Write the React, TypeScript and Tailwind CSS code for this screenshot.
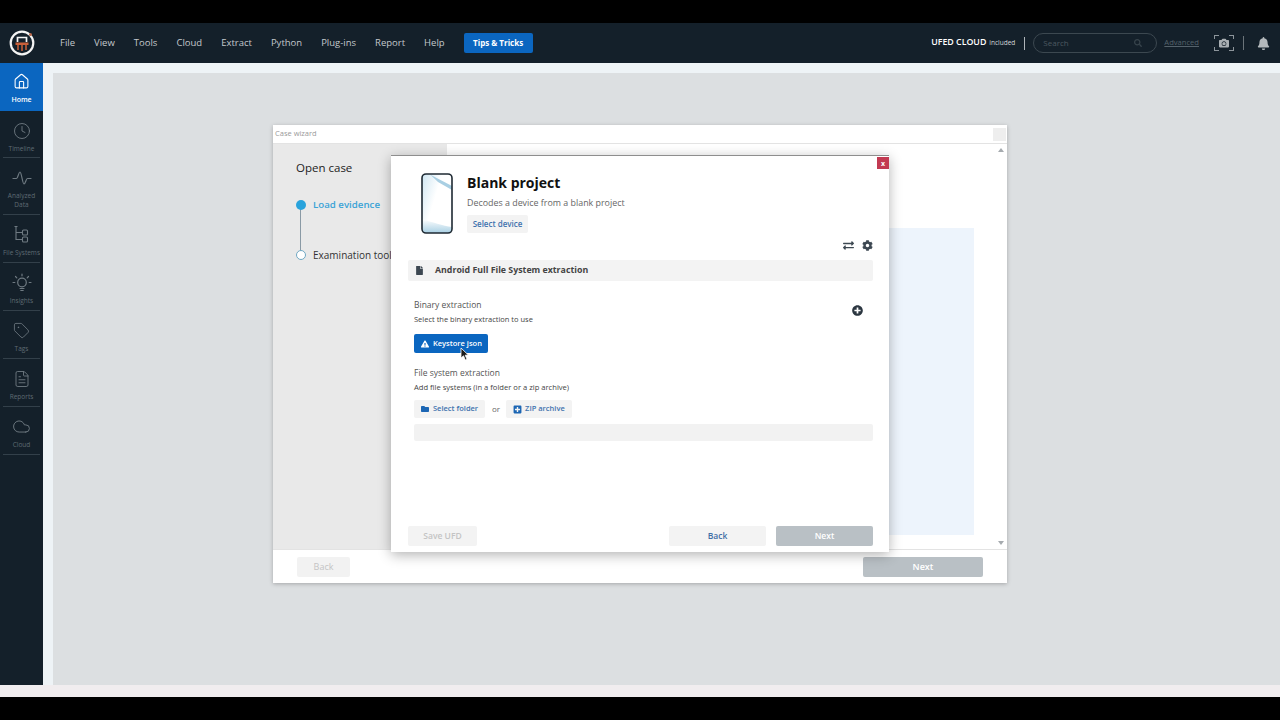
import { Home, Clock, Tag, FileText, Cloud } from 'lucide-react';
import { FaFile, FaExchangeAlt, FaCog, FaPlusCircle, FaExclamationTriangle, FaFolder, FaPlusSquare, FaBell, FaCamera, FaSearch } from 'react-icons/fa';

const menus = ['File', 'View', 'Tools', 'Cloud', 'Extract', 'Python', 'Plug-ins', 'Report', 'Help'];

function FileSystemsIcon() {
  return (
    <svg width="15" height="17" viewBox="0 0 15 17" fill="none" stroke="currentColor" strokeWidth="1.1">
      <path d="M2 0.500V13.500H8M2 6.500H8" />
      <path d="M0.500 0.500H3.500" />
      <rect x="8.500" y="4" width="5" height="5" rx="1" />
      <rect x="8.500" y="11" width="5" height="5" rx="1" />
    </svg>
  );
}

function PulseIcon() {
  return (
    <svg width="20" height="16" viewBox="0 0 20 16" fill="none" stroke="currentColor" strokeWidth="1.2" strokeLinecap="round" strokeLinejoin="round">
      <path d="M1 8.500H4.500C6 8.500 6.500 2 8 2C9.500 2 10.500 14 12 14C13.500 14 14 8.500 15.500 8.500H19" />
    </svg>
  );
}

function BulbIcon() {
  return (
    <svg width="20" height="20" viewBox="0 0 20 20" fill="none" stroke="currentColor" strokeWidth="1.2" strokeLinecap="round">
      <circle cx="10" cy="9.500" r="4.300" />
      <path d="M8 15.500H12M8.800 17.500H11.200" />
      <path d="M10 1V2.800M3.500 3.500L4.800 4.800M16.500 3.500L15.200 4.800M1 9.500H2.800M17.200 9.500H19" />
    </svg>
  );
}

const navItems = [
  { label: ['Timeline'], icon: <Clock size={18} strokeWidth={1.2} />, h: 'h-[47px]' },
  { label: ['Analyzed', 'Data'], icon: <PulseIcon />, h: 'h-[57px]' },
  { label: ['File Systems'], icon: <FileSystemsIcon />, h: 'h-[48px]' },
  { label: ['Insights'], icon: <BulbIcon />, h: 'h-[48px]' },
  { label: ['Tags'], icon: <Tag size={17} strokeWidth={1.2} />, h: 'h-[48px]' },
  { label: ['Reports'], icon: <FileText size={18} strokeWidth={1.2} />, h: 'h-[48px]' },
  { label: ['Cloud'], icon: <Cloud size={19} strokeWidth={1.2} />, h: 'h-[48px]' },
];

function Logo() {
  return (
    <svg width="26" height="26" viewBox="0 0 26 26" fill="none">
      <circle cx="13" cy="13" r="11.300" stroke="#f4f4f4" strokeWidth="2.200" />
      <circle cx="21.500" cy="4.500" r="1.500" fill="#b9694a" />
      <path d="M8.500 12V7.500H17.500V12" stroke="#f4f4f4" strokeWidth="1.700" />
      <path d="M6.500 12.500H19.500V15H6.500Z" fill="#c9603a" />
      <path d="M9 15V20M13 15V21M17 15V20" stroke="#c9603a" strokeWidth="1.500" />
    </svg>
  );
}

function PhoneIcon() {
  return (
    <svg width="32" height="61" viewBox="0 0 32 61" fill="none">
      <defs>
        <linearGradient id="phoneTop" x1="0" y1="0" x2="1" y2="0.6">
          <stop offset="0" stopColor="#cfe6f2" />
          <stop offset="0.5" stopColor="#ffffff" />
          <stop offset="1" stopColor="#ffffff" />
        </linearGradient>
        <linearGradient id="phoneBottom" x1="0" y1="0" x2="0" y2="1">
          <stop offset="0" stopColor="#ffffff" />
          <stop offset="1" stopColor="#a9d0e4" />
        </linearGradient>
      </defs>
      <rect x="1" y="1" width="30" height="59" rx="4" fill="url(#phoneTop)" />
      <path d="M9 1.500L31 13V17L17 9Z" fill="#a9cfe3" />
      <path d="M1 46C11 49 22 53 31 54V56C31 58.500 29.500 60 27 60H5C2.500 60 1 58.500 1 56Z" fill="url(#phoneBottom)" />
      <rect x="1" y="1" width="30" height="59" rx="4" stroke="#1f2a33" strokeWidth="1.600" />
    </svg>
  );
}

function Cursor() {
  return (
    <svg className="absolute left-[46px] top-[13px]" width="9" height="14" viewBox="0 0 9 14">
      <path d="M1 1V11L3.500 8.800L5.300 13L7 12.200L5.200 8.200L8.300 8Z" fill="#1b1b1b" stroke="#ffffff" strokeWidth="0.800" />
    </svg>
  );
}

export default function App() {
  return (
    <div className="h-[720px] w-[1280px] overflow-hidden bg-black flex flex-col pt-[23px] pb-[23px] font-['Open_Sans',sans-serif]">
      {/* Top bar */}
      <header className="h-[40px] shrink-0 bg-[#14202a] flex items-center">
        <div className="w-[44px] flex justify-center">
          <Logo />
        </div>
        <nav className="flex items-center gap-[19px] ml-[16px] text-[9.500px] text-[#c3c8cc]">
          {menus.map((m) => (
            <span key={m}>{m}</span>
          ))}
        </nav>
        <div className="ml-[19px] h-[20px] w-[69px] rounded-[2px] bg-[#0b66c0] text-white text-[8px] font-bold flex items-center justify-center">
          Tips &amp; Tricks
        </div>
        <div className="ml-auto flex items-center pr-[10px]">
          <span className="text-white text-[8.800px] font-semibold">UFED CLOUD</span>
          <span className="text-[#d5d8da] text-[6.500px] ml-[3px]">included</span>
          <span className="w-px h-[13px] bg-[#aeb4b9] ml-[9px]" />
          <div className="ml-[8px] w-[124px] h-[20px] rounded-full border border-[#3c4850] flex items-center justify-between pl-[9px] pr-[14px] text-[8px] text-[#4c5860]">
            <span>Search</span>
            <FaSearch size={8} className="text-[#37434b]" />
          </div>
          <span className="ml-[7px] text-[7.600px] text-[#55626b] underline">Advanced</span>
          <div className="ml-[15px] w-[20px] h-[16px] relative flex items-center justify-center text-[#a9afb3]">
            <FaCamera size={10} />
            <span className="absolute left-0 top-0 w-[5px] h-[4px] border-l border-t border-[#8d959b]" />
            <span className="absolute right-0 top-0 w-[5px] h-[4px] border-r border-t border-[#8d959b]" />
            <span className="absolute left-0 bottom-0 w-[5px] h-[4px] border-l border-b border-[#8d959b]" />
            <span className="absolute right-0 bottom-0 w-[5px] h-[4px] border-r border-b border-[#8d959b]" />
          </div>
          <span className="ml-[9px] w-px h-[14px] bg-[#6b747a]" />
          <FaBell size={13} className="ml-[13px] text-[#b4b9bc]" />
        </div>
      </header>

      <div className="h-[622px] shrink-0 flex">
        {/* Sidebar */}
        <aside className="w-[43px] shrink-0 bg-[#14202a] flex flex-col">
          <div className="h-[48px] bg-[#0b66c0] text-white flex flex-col items-center pt-[10px]">
            <Home size={17} strokeWidth={1.5} />
            <span className="text-[7px] font-semibold mt-[5px]">Home</span>
          </div>
          {navItems.map((item) => (
            <div key={item.label[0]} className={`${item.h} mx-[3px] border-b border-[#33404a] flex flex-col items-center pt-[10px] text-[#6f7a82]`}>
              <div className="h-[19px] flex items-center justify-center">{item.icon}</div>
              <div className="mt-[4px] text-[6.500px] leading-[9px] text-center whitespace-nowrap text-[#5f6b73]">
                {item.label.map((l) => (
                  <div key={l}>{l}</div>
                ))}
              </div>
            </div>
          ))}
        </aside>

        {/* Content area */}
        <main className="flex-1 bg-[#eef3f6] pl-[10px] pt-[10px]">
          <div className="h-full bg-[#dcdfe1] pl-[220px] pt-[52px]">
            {/* Case wizard */}
            <div className="relative w-[734px] h-[458px] bg-white shadow-[0_1px_4px_rgba(0,0,0,0.25)] flex flex-col">
              <div className="h-[19px] shrink-0 border-b border-[#e3e3e3] flex items-center justify-between pl-[2px] pr-[1px]">
                <span className="text-[7.500px] text-[#9a9a9a]">Case wizard</span>
                <span className="w-[13px] h-[13px] bg-[#eeeeee]" />
              </div>
              <div className="flex-1 flex min-h-0">
                <div className="w-[174px] shrink-0 bg-[#e9e9e9] pl-[23px] pt-[15px]">
                  <div className="text-[11.500px] text-[#222222] leading-[18px]">Open case</div>
                  <div className="relative mt-[21px]">
                    <div className="absolute left-[4px] top-[8px] w-px h-[50px] bg-[#8a9aa5]" />
                    <div className="flex items-center h-[14px]">
                      <span className="relative w-[10px] h-[10px] rounded-full bg-[#29a3dc]" />
                      <span className="ml-[7px] mt-[1px] text-[9.700px] font-semibold text-[#3aa3d6]">Load evidence</span>
                    </div>
                    <div className="flex items-center h-[14px] mt-[36px]">
                      <span className="relative w-[10px] h-[10px] rounded-full bg-white border border-[#6fa8c4]" />
                      <span className="ml-[7px] text-[10px] text-[#333333] whitespace-nowrap">Examination tools</span>
                    </div>
                  </div>
                </div>
                <div className="flex-1 flex">
                  <div className="flex-1 pt-[84px] pl-[442px] pb-[14px]">
                    <div className="w-[85px] h-full bg-[#edf4fc]" />
                  </div>
                  <div className="w-[13px] flex flex-col justify-between items-center py-[4px] text-[#9aa0a4]">
                    <span className="w-0 h-0 border-x-[3px] border-x-transparent border-b-[4px] border-b-[#a6abaf]" />
                    <span className="w-0 h-0 border-x-[3px] border-x-transparent border-t-[4px] border-t-[#a6abaf]" />
                  </div>
                </div>
              </div>
              <div className="h-[34px] shrink-0 border-t border-[#e3e3e3] flex items-center justify-between pl-[24px] pr-[24px]">
                <div className="w-[53px] h-[20px] bg-[#f2f2f2] rounded-[2px] flex items-center justify-center text-[9px] text-[#c4c4c4]">Back</div>
                <div className="w-[120px] h-[20px] bg-[#b9c0c5] rounded-[2px] flex items-center justify-center text-[9px] font-semibold text-white">Next</div>
              </div>

              {/* Blank project dialog */}
              <div className="absolute left-[118px] top-[30px] w-[498px] h-[397px] bg-white border-t border-[#8e8e8e] shadow-[0_3px_12px_rgba(0,0,0,0.3)] flex flex-col pl-[17px] pr-[16px]">
                <div className="absolute right-0 top-[1px] w-[12px] h-[12px] bg-[#c23a52] text-white text-[7px] font-bold flex items-center justify-center leading-none">x</div>
                <div className="flex pl-[13px] pt-[17px]">
                  <PhoneIcon />
                  <div className="ml-[14px]">
                    <div className="text-[14px] font-bold text-[#111111] leading-[20px]">Blank project</div>
                    <div className="text-[8.900px] text-[#666666] leading-[13px] mt-[3px]">Decodes a device from a blank project</div>
                    <div className="mt-[6px] w-[61px] h-[18px] bg-[#f3f3f3] rounded-[2px] flex items-center justify-center text-[8px] font-semibold text-[#3f72ae]">Select device</div>
                  </div>
                </div>
                <div className="flex justify-end items-center gap-[8px] h-[12px] mt-[5px] text-[#3d4852]">
                  <FaExchangeAlt size={11} />
                  <FaCog size={11} />
                </div>
                <div className="h-[21px] mt-[9px] bg-[#f3f3f3] rounded-[2px] flex items-center pl-[7px] text-[#3d4852]">
                  <FaFile size={9} />
                  <span className="ml-[11px] text-[8.800px] font-bold text-[#444444]">Android Full File System extraction</span>
                </div>
                <div className="flex justify-between items-start pl-[6px] mt-[18px]">
                  <div>
                    <div className="text-[8.500px] text-[#555555] leading-[12px]">Binary extraction</div>
                    <div className="text-[7.500px] text-[#444444] leading-[11px] mt-[3px]">Select the binary extraction to use</div>
                  </div>
                  <FaPlusCircle size={11} className="text-[#2b3640] mt-[6px] mr-[10px]" />
                </div>
                <div className="pl-[6px] mt-[9px]">
                  <div className="relative w-[74px] h-[19px] bg-[#0b66c0] rounded-[2px] flex items-center pl-[7px] text-white">
                    <FaExclamationTriangle size={8} />
                    <span className="ml-[4px] text-[7.500px] font-semibold whitespace-nowrap">Keystore json</span>
                    <Cursor />
                  </div>
                </div>
                <div className="pl-[6px] mt-[14px]">
                  <div className="text-[8.500px] text-[#555555] leading-[12px]">File system extraction</div>
                  <div className="text-[7.600px] text-[#444444] leading-[11px] mt-[3px]">Add file systems (in a folder or a zip archive)</div>
                  <div className="flex items-center mt-[7px]">
                    <div className="w-[71px] h-[18px] bg-[#f3f3f3] rounded-[2px] flex items-center pl-[7px] text-[#1c66b4]">
                      <FaFolder size={8} />
                      <span className="ml-[4px] text-[7.500px] font-semibold text-[#3f72ae] whitespace-nowrap">Select folder</span>
                    </div>
                    <span className="ml-[7px] text-[8px] text-[#666666]">or</span>
                    <div className="ml-[6px] w-[66px] h-[18px] bg-[#f3f3f3] rounded-[2px] flex items-center pl-[7px] text-[#1c66b4]">
                      <FaPlusSquare size={9} />
                      <span className="ml-[3px] text-[7.500px] font-semibold text-[#3f72ae] whitespace-nowrap">ZIP archive</span>
                    </div>
                  </div>
                </div>
                <div className="ml-[6px] mt-[6px] h-[17px] bg-[#f2f2f2] rounded-[2px]" />
                <div className="mt-auto mb-[6px] flex items-center">
                  <div className="w-[69px] h-[20px] bg-[#f3f3f3] rounded-[2px] flex items-center justify-center text-[8.500px] font-semibold text-[#c4c4c4]">Save UFD</div>
                  <div className="ml-auto w-[97px] h-[20px] bg-[#f3f3f3] rounded-[2px] flex items-center justify-center text-[8.500px] font-semibold text-[#3f6ea6]">Back</div>
                  <div className="ml-[10px] w-[97px] h-[20px] bg-[#b9c0c5] rounded-[2px] flex items-center justify-center text-[8.500px] font-semibold text-white">Next</div>
                </div>
              </div>
            </div>
          </div>
        </main>
      </div>

      {/* Bottom strip */}
      <div className="h-[12px] shrink-0 bg-[#f1edef]" />
    </div>
  );
}
